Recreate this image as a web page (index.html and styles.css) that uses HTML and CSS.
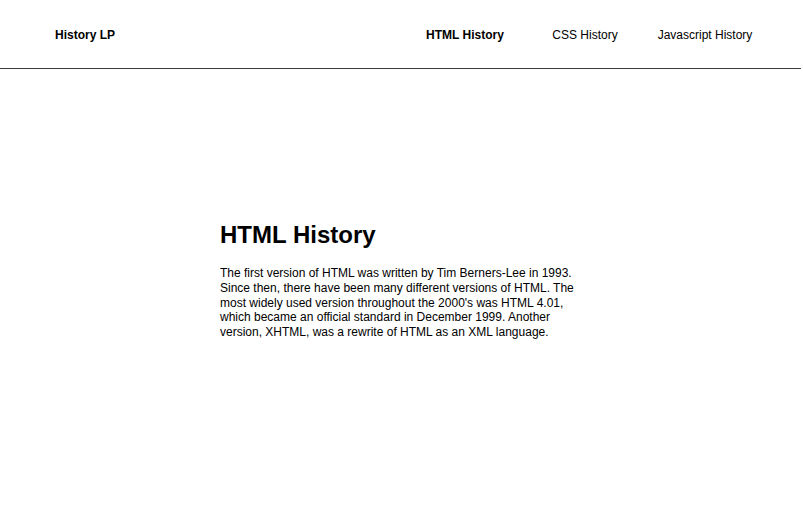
FILE: index.html
```html
<!DOCTYPE html>
<html>
<head>
<meta charset="utf-8">
<link rel="stylesheet" href="styles.css">
</head>
<body>
<header class="header">
  <div class="logo">History LP</div>
  <nav class="nav">
    <a class="nav-link active" href="#">HTML History</a>
    <a class="nav-link" href="#">CSS History</a>
    <a class="nav-link" href="#">Javascript History</a>
  </nav>
</header>
<main class="main">
  <section class="article">
    <h1 class="title">HTML History</h1>
    <p class="text">The first version of HTML was written by Tim Berners-Lee in 1993. Since then, there have been many different versions of HTML. The most widely used version throughout the 2000's was HTML 4.01, which became an official standard in December 1999. Another version, XHTML, was a rewrite of HTML as an XML language.</p>
  </section>
</main>
</body>
</html>
```
FILE: styles.css
```css
html, body {
  margin: 0;
  padding: 0;
  background: #fff;
  color: #000;
  font-family: "Liberation Sans", Arial, sans-serif;
}
.header {
  width: 801px;
  height: 68px;
  border-bottom: 1px solid #3a3a3a;
  display: flex;
  align-items: center;
  justify-content: space-between;
  box-sizing: content-box;
}
.logo {
  font-size: 12px;
  font-weight: bold;
  margin-left: 55px;
  margin-top: 1px;
}
.nav {
  display: flex;
  margin-right: 36px;
  margin-top: 1px;
}
.nav-link {
  width: 120px;
  text-align: center;
  font-size: 12px;
  color: #000;
  text-decoration: none;
}
.nav-link.active {
  font-weight: bold;
}
.main {
  padding: 152px 0 0 220px;
}
.article {
  width: 360px;
}
.title {
  font-size: 24px;
  font-weight: bold;
  margin: 0 0 17px 0;
}
.text {
  font-size: 12px;
  line-height: 14.75px;
  margin: 0;
}
```
